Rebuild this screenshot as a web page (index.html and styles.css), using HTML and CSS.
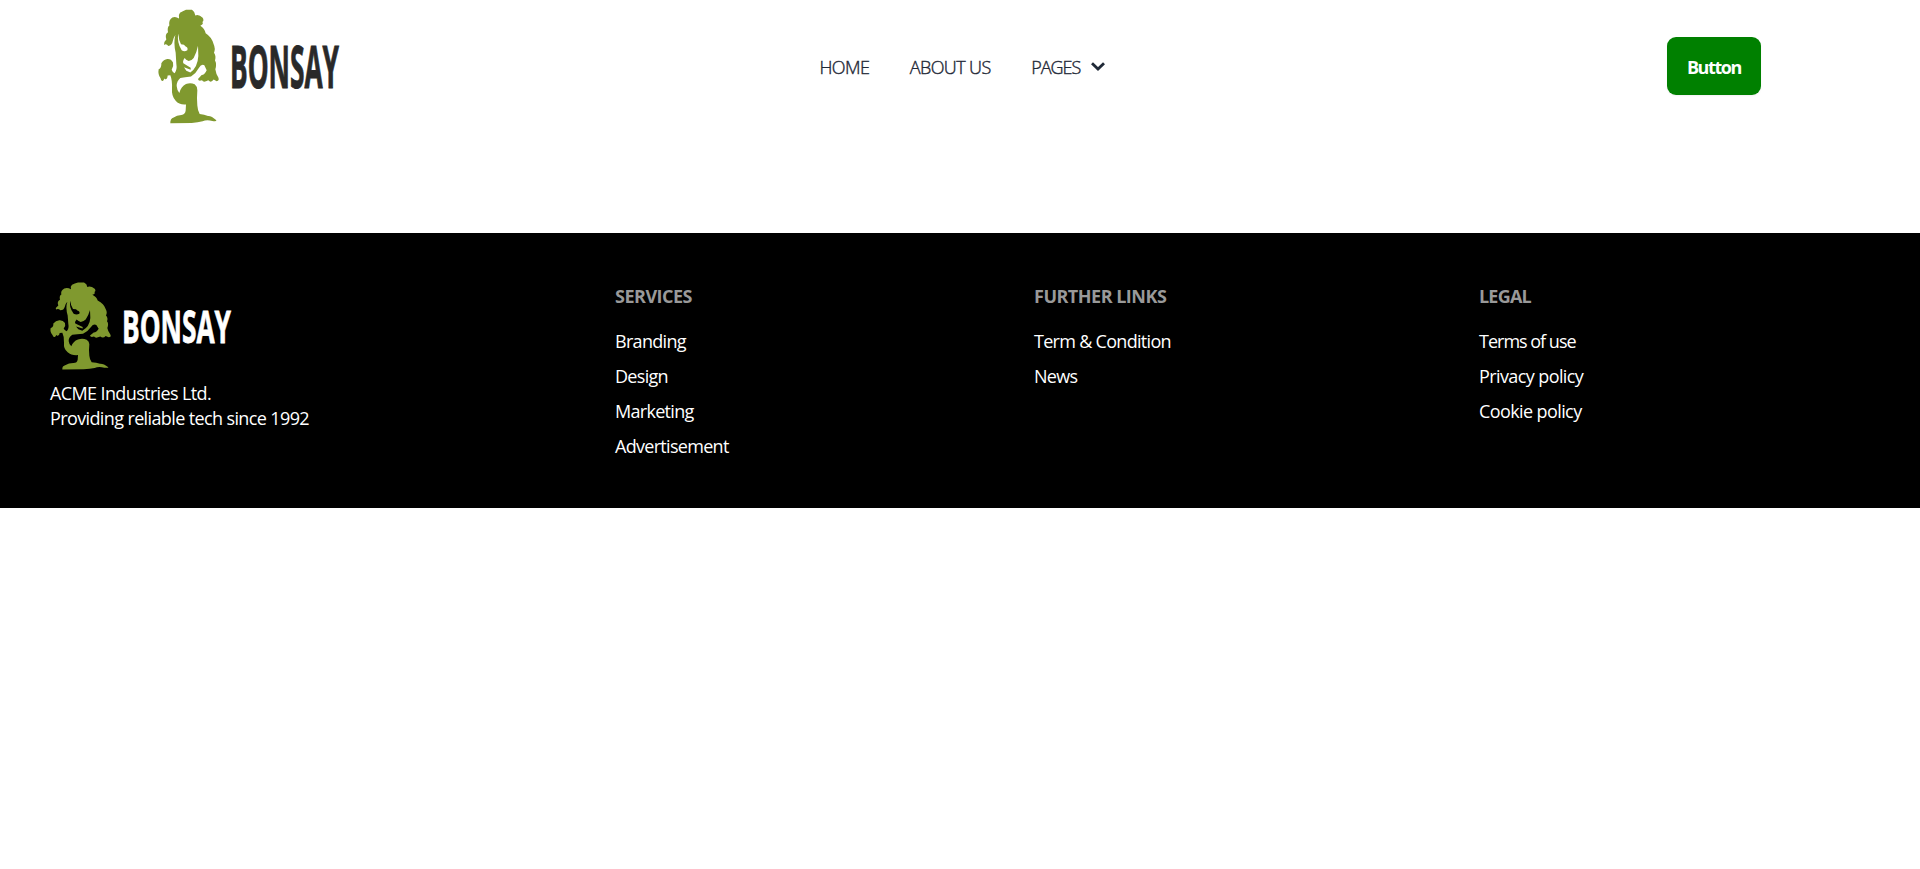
FILE: index.html
```html
<!DOCTYPE html>
<html lang="en">
<head>
<meta charset="utf-8">
<title>Bonsay</title>
<link rel="stylesheet" href="styles.css">
</head>
<body>
<header class="navbar">
  <a class="brand">
    <svg class="logo logo-header" viewBox="24 28 546 342" preserveAspectRatio="none">
      <path id="tree" fill="#80992f" fill-rule="evenodd" d="M108 30 L126 30 Q135 36 136 47 Q147 43 158 54 Q163 62 157 67 Q162 73 151 78 Q164 86 167 100 Q186 112 191 133 Q197 146 192 158 Q199 168 195 181 Q201 190 196 207 Q198 221 205 232 Q209 242 200 243 L191 238 Q183 249 175 240 L168 243 Q160 247 156 240 Q145 244 144 236 L155 224 Q164 224 170 210 L163 195 Q154 190 147 203 Q138 220 123 229 Q104 231 91 233 Q80 242 80 257 Q81 270 88 278 Q93 258 108 251 Q122 246 134 252 Q142 258 142 270 Q140 292 142 315 Q143 330 149 340 Q163 341 174 346 Q184 345 199 359 Q200 363 187 361 Q170 356 158 362 Q144 366 125 367 Q94 367 61 368 Q60 355 71 351 Q80 343 94 343 Q106 342 107 330 L108 312 Q88 314 77 301 Q64 288 66 264 Q67 240 61 225 L53 226 Q52 239 45 237 Q45 230 39 242 Q32 243 32 235 Q23 222 26 207 Q35 203 34 189 Q41 178 52 177 Q63 176 69 187 Q72 199 65 209 Q67 216 74 219 Q82 209 79 191 L77 158 Q70 128 76 105 Q70 113 68 125 Q66 137 55 138 Q49 130 42 135 Q40 127 49 119 Q44 103 54 97 Q51 82 58 77 Q55 61 67 53 Q77 49 87 56 Q84 46 90 39 Q98 34 108 30 Z M85 101 Q80 127 95 151 Q103 157 112 151 Q115 142 106 139 L102 134 L93 133 Q86 121 85 101 Z M144 137 Q140 157 131 174 Q126 181 116 183 Q107 180 104 174 Q97 184 100 189 L122 203 L122 209 L102 201 L109 212 L121 217 Q143 202 145 168 Z"/>
      <text x="240" y="264" class="logo-word" textLength="327" lengthAdjust="spacingAndGlyphs">BONSAY</text>
    </svg>
  </a>
  <nav class="menu">
    <a>HOME</a>
    <a>ABOUT US</a>
    <a class="pages"><span>PAGES</span><svg class="chevron" viewBox="0 0 14 9"><path d="M1 1.2 7 7 13 1.2" fill="none" stroke="#1f2937" stroke-width="2.8"/></svg></a>
  </nav>
  <a class="button">Button</a>
</header>
<footer class="footer">
  <div class="about">
    <svg class="logo logo-footer" viewBox="24 28 546 342" preserveAspectRatio="none">
      <use href="#tree"/>
      <text x="240" y="264" class="logo-word" textLength="327" lengthAdjust="spacingAndGlyphs">BONSAY</text>
    </svg>
    <p>ACME Industries Ltd.<br>Providing reliable tech since 1992</p>
  </div>
  <div class="column">
    <h2>SERVICES</h2>
    <a>Branding</a><a>Design</a><a>Marketing</a><a>Advertisement</a>
  </div>
  <div class="column">
    <h2>FURTHER LINKS</h2>
    <a>Term &amp; Condition</a><a>News</a>
  </div>
  <div class="column legal">
    <h2>LEGAL</h2>
    <a class="wide">Terms of use</a><a>Privacy policy</a><a>Cookie policy</a>
  </div>
</footer>
</body>
</html>
```

FILE: styles.css
```css
* { box-sizing: border-box; }
body {
  margin: 0;
  background: #fff;
  color: #1f2937;
  font: 18px/25px "Open Sans", "Noto Sans", sans-serif;
  letter-spacing: -0.62px;
}
.logo { display: block; width: 182px; overflow: visible; }
.logo-header { height: 115px; color: #292929; }
.logo-footer { height: 88px; margin-top: -1px; color: #fff; }
.logo-word {
  font: 700 176px "Open Sans", sans-serif;
  letter-spacing: 0;
  fill: currentColor;
  stroke: currentColor;
  stroke-width: 3px;
}
.navbar {
  display: grid;
  grid-template-columns: 661.5px 1fr auto;
  align-items: center;
  height: 132px;
  padding: 0 159px 0 158px;
  margin-bottom: 101px;
}
.menu {
  display: flex;
  gap: 40.5px;
  padding-top: 3px;
  font-weight: 300;
  letter-spacing: -0.6px;
  -webkit-text-stroke: .4px #1f2937;
}
.pages { display: flex; align-items: center; gap: 11px; letter-spacing: -1px; }
.chevron { width: 14px; height: 9px; margin-top: -3px; }
.button {
  width: 94px;
  height: 58px;
  border-radius: 9px;
  background: #008000;
  color: #fff;
  font-weight: 700;
  letter-spacing: -1.4px;
  line-height: 61px;
  text-align: center;
  box-shadow: 0 1px 2px rgba(0, 0, 0, .06);
}
.footer {
  display: grid;
  grid-template-columns: 565px 419px 445px 1fr;
  height: 275px;
  padding: 50px;
  background: #000;
  color: #fff;
}
.about p { margin: 11px 0 0; }
.column {
  display: flex;
  flex-direction: column;
  align-items: flex-start;
  gap: 10px;
  letter-spacing: -0.7px;
}
.column h2 {
  margin: 1px 0 10px;
  font-size: 18px;
  line-height: 25px;
  font-weight: 700;
  letter-spacing: -0.5px;
  color: #999;
}
.legal { letter-spacing: -0.6px; }
.legal .wide { letter-spacing: -1px; }
.legal h2 { letter-spacing: -0.8px; }
```
